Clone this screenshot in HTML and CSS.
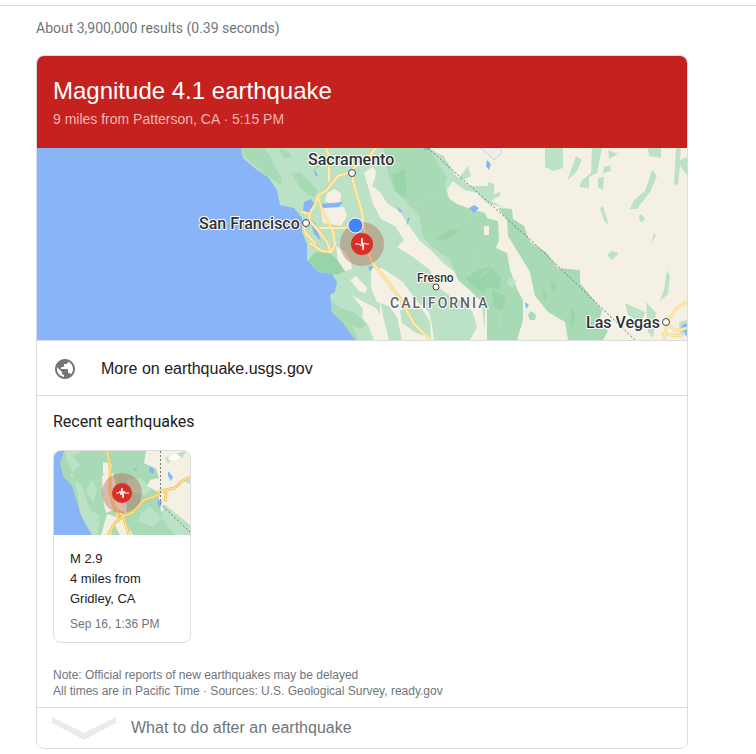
FILE: index.html
```html
<!DOCTYPE html>
<html lang="en">
<head>
<meta charset="utf-8">
<meta name="viewport" content="width=device-width, initial-scale=1">
<title>Earthquake - Search</title>
<link rel="stylesheet" href="styles.css">
</head>
<body>
<main class="results">
  <p class="stats">About 3,900,000 results (0.39 seconds)</p>
  <article class="card">
    <header class="alert">
      <h1 class="alert-title">Magnitude 4.1 earthquake</h1>
      <p class="alert-sub">9 miles from Patterson, CA · 5:15 PM</p>
    </header>
    <svg class="map" viewBox="37 148 650 192" preserveAspectRatio="xMidYMid slice" role="img" aria-label="Map of California">
      <rect x="37" y="148" width="650" height="192" fill="#f5f0e4"/>
      <!-- coastal ranges and foothills -->
      <path fill="#bbe2c6" d="M230 148H430L446 160 456 176 447 190 460 240 485 300V340H350L300 260 280 215Z"/>
      <path fill="#a8dab5" d="M241 148H264L271 157 276 170 282 178 280 185 264 173 245 157ZM278 148L289 152 292 158 284 158ZM291 173L300 172 318 190 314 198 302 190ZM312 158L318 157 321 166 316 170ZM331 301L341 308 354 312 366 324 361 329 352 325 358 340H353L343 323 333 313Z"/>
      <path fill="#98d4a8" d="M308 261L315 252 330 253 339 262 346 271 337 275 318 272Z"/>
      <!-- central valley -->
      <path fill="#f5f0e4" d="M364 173L372 167 376 171 375 178 372 186 380 192 387 203 400 212 412 230 420 241 433 252 443 263 456 273 466 283 472 293 481 300 484 322 486 340H470L477 327 473 313 465 302 450 296 437 286 430 270 413 257 397 247 404 240 395 226 381 219 373 204 369 190Z"/>
      <path fill="#f5f0e4" d="M327 193L335 189 341 194 340 203 333 205 325 201ZM320 208L344 207 347 216 341 226 323 223ZM336 246L345 252 351 262 352 269 345 271 338 261ZM371 268L382 268 394 276 403 282 410 292 419 303 429 312 432 325 434 340H402L397 317 389 306 377 302 371 288ZM350 280L356 276 367 288 366 293 359 291ZM352 295L364 302 376 308 384 320 389 340H374L368 325 362 317 363 309ZM380 300L384 320 386 340H380Z"/>
      <path fill="#bbe2c6" d="M400 310L420 306 430 321 431 338 416 333 402 323Z"/>
      <!-- sierra nevada -->
      <path fill="#a8dab5" d="M383 148H430L438 157 449 166 450 174 445 183 447 197 457 204 471 209 485 213 487 218 498 221 499 240 496 248 507 253 510 270 517 289 523 300 523 320 517 340H487V307L473 293 458 280 450 260 430 245 422 235 420 217 405 200 394 190 388 174Z"/>
      <path fill="#f5f0e4" d="M484 226H489V235H484Z"/>
      <path fill="#9ad5aa" d="M392 175L405 169 407 198 396 192ZM434 240L450 229 460 231 447 240ZM465 278L481 269 490 266 501 278 500 289 489 287 483 293 474 287ZM492 289L506 297 501 313 493 305Z"/>
      <path fill="none" stroke="#b7dfbf" d="M413 204L421 200M428 199L437 194M465 221L470 217M480 277L495 265M472 255L480 258M500 310V325"/>
      <path fill="#bbe2c6" d="M430 150L444 156 449 170 459 178 468 166 471 176 462 180 470 186 488 186 488 182 494 184 494 194 500 192 501 195 491 201 505 208 487 203 477 193 465 190 452 181 447 178Z"/>
      <path fill="#a8dab5" d="M498 208L512 209 513 219 524 226 530 242 546 252 558 268 580 270 580 283 602 310 599 322 608 331 603 340H568L565 322 548 312 535 296 530 272 516 249 508 236 507 220Z"/>
      <path fill="#9ad5aa" d="M550 279L557 287 553 291ZM571 309L575 311 574 328 570 325ZM540 287L547 294 545 300Z"/>
      <path fill="#bbe2c6" d="M545 148H563L563 168 553 171 545 167ZM576 156L582 160 577 171 567 181ZM592 148H602L597 173 589 177 589 188 580 187 581 181 591 173ZM608 150L618 154 609 159ZM604 167L610 165 611 171 603 173ZM598 178L604 177 603 190 598 187ZM603 206L609 226 604 220 600 209ZM648 148H661V158L649 156ZM652 170L657 176 650 192 637 209 630 209 634 200 645 191ZM640 214L645 218 642 223 639 219ZM654 233L656 235 651 243ZM676 148H681L680 160 687 157V175L680 166 678 185 674 184ZM607 255L612 251 619 253 612 260ZM667 270L670 276 668 294 660 301 664 290ZM625 303L645 312 642 324 628 315ZM646 302L656 313 653 338 648 332ZM679 322L687 320V337L680 333ZM508 276L516 281 513 288 507 284Z"/>
      <path fill="#a8dab5" d="M528 315L531 311 536 315 535 320 530 320Z"/>
      <!-- pacific and lakes -->
      <path fill="#8ab4f8" d="M37 148H241L243 158 257 170 268 177 277 190 280 205 294 208 302 218 302 232 307 244 307 260 318 272 332 274 337 282 335 292 330 295 332 312 343 323 355 340H37Z"/>
      <path fill="#8ab4f8" d="M304 202L311 199 315 204 311 213 303 211ZM309 218L315 223 319 235 321 241 314 234ZM320 204L343 202 339 207 323 208ZM313 168L318 175 316 177ZM469 208L474 205 479 208 474 213ZM487 160L491 164 489 170 486 166ZM397 206L402 211 400 213ZM408 217L410 219 406 226ZM370 265L373 267 371 271 368 269ZM525 302L529 305 526 309ZM684 324H687V336L681 327ZM424 148H430V150H423Z"/>
      <!-- highways: casing, then fill -->
      <defs>
        <path id="highways" d="M326 148L329 156V181M351 172L338 176 327 190 318 196 315 205 310 213 309 220 318 230 327 242 330 250M376 148L369 156 353 169 353 181 357 195 362 212 365 235 367 250 372 262 388 282 401 300 414 324 431 340M318 197L322 210 327 220 333 231 335 245 331 252 322 251 310 243M302 212L309 214M303 225L306 234 315 243M320 228H350L362 223M687 302L676 309 667 322 664 340M667 323L676 331 687 328M663 334L681 336"/>
      </defs>
      <g fill="none" stroke-linejoin="round" stroke-linecap="round">
        <use href="#highways" stroke="#efcf78" stroke-width="3"/>
        <use href="#highways" stroke="#ffebae" stroke-width="2"/>
      </g>
      <path fill="#edf0ea" stroke="#ccd7d4" d="M480 148L490 156 494 160 501 154V148Z"/>
      <path fill="none" stroke="#777" stroke-dasharray="2 2" d="M428 148L535 244 635 340"/>
      <!-- epicenter and current location -->
      <circle cx="362" cy="244" r="22" fill="#b04a3c" fill-opacity=".34"/>
      <circle cx="362" cy="244" r="11" fill="#d93025"/>
      <path class="pulse" d="M355 244H359L361 246 362 238 363 250 364 243 366 244H369"/>
      <circle cx="355.500" cy="225.500" r="7.500" fill="#4285f4" stroke="#fff"/>
      <g class="towns"><circle cx="352" cy="173" r="3.500"/><circle cx="306" cy="223" r="3.500"/><circle cx="436" cy="287" r="3"/><circle cx="666" cy="322" r="3.500"/></g>
      <g class="labels">
        <text x="308" y="165">Sacramento</text>
        <text x="199" y="229">San Francisco</text>
        <text x="586" y="328">Las Vegas</text>
        <text class="label-small" x="417" y="282">Fresno</text>
        <text class="label-state" x="390" y="308">CALIFORNIA</text>
      </g>
    </svg>
    <a class="more" href="#">
      <svg class="globe" viewBox="0 0 24 24" aria-hidden="true"><path fill="currentColor" d="M12 2C6.480 2 2 6.480 2 12s4.480 10 10 10 10-4.480 10-10S17.520 2 12 2zm-1 17.930c-3.950-.490-7-3.850-7-7.930 0-.620.080-1.210.210-1.790L9 15v1c0 1.100.900 2 2 2v1.930zm6.900-2.540c-.260-.810-1-1.390-1.900-1.390h-1v-3c0-.550-.450-1-1-1H8v-2h2c.550 0 1-.450 1-1V7h2c1.100 0 2-.900 2-2v-.410c2.930 1.190 5 4.060 5 7.410 0 2.080-.800 3.970-2.100 5.390z"/></svg>
      <span>More on earthquake.usgs.gov</span>
    </a>
    <section class="recent">
      <h2 class="recent-title">Recent earthquakes</h2>
      <a class="quake" href="#">
        <svg class="quake-map" viewBox="54 451 136 84" preserveAspectRatio="xMidYMid slice" aria-hidden="true">
          <rect x="54" y="451" width="136" height="84" fill="#a8dab5"/>
          <path fill="#bbe2c6" d="M64 451H82L73 457 80 465 70 475 82 486 90 510 100 516 98 535H84L75 480ZM91 480L97 488 94 503 86 492ZM126 480L142 478 151 490 144 496 132 491ZM140 514L150 507 162 518 153 527 139 522Z"/>
          <path fill="#f5f0e4" d="M146 451H190V535L173 520 161 511 158 492 147 486 150 480 159 478 156 469 144 463ZM103 462L112 464 110 478 103 474ZM102 476L113 473 117 490 127 505 126 513 116 509 106 513 103 500ZM107 514L124 519 133 535H120L114 524 111 535H101Z"/>
          <path fill="#bbe2c6" d="M165 457L173 457 168 464ZM177 453L186 451 182 459ZM164 504L178 515 190 525V535H174L162 518ZM183 481L190 479V484Z"/>
          <path fill="#fff" d="M167 459L175 454 181 457 174 461Z"/>
          <path fill="#8ab4f8" d="M54 451H64L60 463 63 476 72 486 76 499 80 513 86 525 92 535H54ZM168 471L173 477 171 481 168 476ZM150 466L154 469 153 474 149 472ZM158 499L162 502 160 508 157 504ZM134 468L138 469 135 471ZM138 500L140 502 137 503ZM127 528L130 530 128 532Z"/>
          <defs>
            <path id="routes" d="M107 451L110 466V490L114 507 123 516 132 513 144 500 158 495 160 491 175 488 182 481 190 477M123 516L115 523 108 535M123 516L129 535M162 491L166 493 165 502M117 510V518"/>
          </defs>
          <g fill="none" stroke-linejoin="round">
            <use href="#routes" stroke="#efc868" stroke-width="3"/>
            <use href="#routes" stroke="#ffe9a4"/>
            <path stroke="#777" stroke-dasharray="2 2" d="M160.500 451V504L190 532"/>
          </g>
          <circle cx="122" cy="493" r="20" fill="#b04a3c" fill-opacity=".34"/>
          <circle cx="122" cy="493" r="10" fill="#d93025"/>
          <path class="pulse" d="M116 493H119L120 491 121 495 122 488 123 498 124 491 125 493H129"/>
        </svg>
        <span class="quake-body">
          <span class="quake-name">M 2.9<br>4 miles from<br>Gridley, CA</span>
          <span class="quake-time">Sep 16, 1:36 PM</span>
        </span>
      </a>
      <p class="note">Note: Official reports of new earthquakes may be delayed<br>All times are in Pacific Time · Sources: U.S. Geological Survey, ready.gov</p>
    </section>
    <button class="expand" type="button">
      <svg class="chevron" viewBox="0 0 64 23" aria-hidden="true"><path fill="#ebebeb" d="M0 0L32 16 64 0V6L32 23 0 6Z"/></svg>
      <span>What to do after an earthquake</span>
    </button>
  </article>
</main>
</body>
</html>
```
FILE: styles.css
```css
* { box-sizing: border-box; }
body {
  margin: 5px 0 0;
  border-top: 1px solid #dadce0;
  background: #fff;
  color: #202124;
  font-family: "Liberation Sans", Arial, sans-serif;
}
h1, h2, p { margin: 0; font-weight: 400; }
a { color: inherit; text-decoration: none; }
svg { display: block; }
.results { max-width: 688px; padding: 12px 0 5px 36px; }
.stats {
  margin-bottom: 17px;
  color: #70757a;
  font: 14px/20px Roboto, sans-serif;
}
.card {
  overflow: hidden;
  border: 1px solid #dadce0;
  border-radius: 8px;
}
.alert { padding: 19px 16px 17px; background: #c5221f; color: #fff; }
.alert-title { font-size: 24px; line-height: 32px; }
.alert-sub { color: #f1b5b2; font-size: 14px; line-height: 24px; }
.map { width: 100%; height: auto; }
.more {
  display: flex;
  align-items: center;
  gap: 24px;
  height: 56px;
  padding: 2px 16px 0;
  border-top: 1px solid #dadce0;
  border-bottom: 1px solid #dadce0;
  font-size: 16px;
}
.globe { width: 24px; height: 24px; color: #70757a; }
.recent { padding: 14px 16px 8px; }
.recent-title { font: 16px/24px Roboto, sans-serif; }
.quake {
  display: block;
  width: 138px;
  margin: 16px 0 24px;
  overflow: hidden;
  border: 1px solid #dadce0;
  border-radius: 8px;
}
.quake-map { width: 100%; height: auto; }
.quake-body { display: block; padding: 14px 16px 8px; }
.quake-name { display: block; font-size: 13px; line-height: 20px; }
.quake-time { display: block; margin-top: 5px; color: #70757a; font-size: 12px; line-height: 20px; }
.note { color: #70757a; font-size: 12px; line-height: 16px; }
.expand {
  display: flex;
  align-items: center;
  gap: 15px;
  width: 100%;
  height: 41px;
  padding: 0 15px;
  border: 0;
  border-top: 1px solid #dadce0;
  background: #fff;
  color: #70757a;
  font: 16px/24px "Liberation Sans", Arial, sans-serif;
  text-align: left;
}
.chevron { width: 64px; height: 23px; }
.pulse { fill: none; stroke: #fff; stroke-width: 1; stroke-linejoin: round; }
.towns { fill: #fff; stroke: #444; stroke-width: 1; }
.labels {
  fill: #303134;
  stroke: #fff;
  stroke-width: 2;
  stroke-linejoin: round;
  paint-order: stroke;
  font: 500 16px Roboto, sans-serif;
}
.label-small { font-size: 12px; }
.label-state { fill: #5f6368; font-size: 14px; letter-spacing: 2px; }
```
